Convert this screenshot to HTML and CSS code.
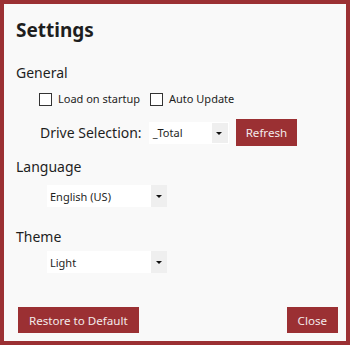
FILE: index.html
```html
<!DOCTYPE html>
<html lang="en">
<head>
  <meta charset="UTF-8">
  <title>Settings</title>
  <link rel="stylesheet" href="styles.css">
</head>
<body>
  <div class="window">
    <h1 class="title">Settings</h1>

    <div class="section section-general">
      <h2>General</h2>
      <div class="checks">
        <label class="check"><span class="box"></span>Load on startup</label>
        <label class="check"><span class="box"></span>Auto Update</label>
      </div>
      <div class="drive-row">
        <span class="drive-label">Drive Selection:</span>
        <div class="select select-small">
          <span class="value">_Total</span>
          <span class="arrow"></span>
        </div>
        <button class="btn btn-refresh">Refresh</button>
      </div>
    </div>

    <div class="section section-language">
      <h2>Language</h2>
      <div class="select select-wide">
        <span class="value">English (US)</span>
        <span class="arrow"></span>
      </div>
    </div>

    <div class="section section-theme">
      <h2>Theme</h2>
      <div class="select select-wide">
        <span class="value">Light</span>
        <span class="arrow"></span>
      </div>
    </div>

    <div class="footer">
      <button class="btn">Restore to Default</button>
      <button class="btn">Close</button>
    </div>
  </div>
</body>
</html>
```

FILE: styles.css
```css
html, body {
  margin: 0;
  padding: 0;
}

body {
  font-family: 'Noto Sans', 'Open Sans', sans-serif;
  color: #1e1e1e;
}

.window {
  width: 350px;
  height: 345px;
  box-sizing: border-box;
  border: 4px solid #9b3033;
  background: #f9f9f9;
  padding: 0 8px 8px 12px;
  display: flex;
  flex-direction: column;
}

.title {
  font-size: 19px;
  font-weight: 700;
  margin: 14px 0 0 0;
  line-height: 24px;
}

.section h2 {
  font-size: 14px;
  font-weight: 400;
  margin: 0;
  line-height: 18px;
}

.section-general {
  margin-top: 22px;
}

.section-language {
  margin-top: 12px;
}

.section-theme {
  margin-top: 21px;
}

.checks {
  display: flex;
  gap: 10px;
  margin: 10px 0 0 23px;
}

.check {
  display: flex;
  align-items: center;
  font-size: 11px;
  line-height: 14px;
}

.box {
  width: 11px;
  height: 11px;
  border: 1px solid #333;
  background: #fff;
  margin-right: 6px;
}

.drive-row {
  display: flex;
  align-items: center;
  margin: 13px 0 0 24px;
}

.drive-label {
  font-size: 14px;
  margin-right: 7px;
}

.select {
  display: flex;
  align-items: stretch;
  background: #fff;
  font-size: 11px;
  height: 22px;
}

.select .value {
  flex: 1;
  display: flex;
  align-items: center;
  padding-left: 3px;
}

.select .arrow {
  width: 16px;
  background: #efefef;
  position: relative;
}

.select .arrow::after {
  content: "";
  position: absolute;
  left: 5px;
  top: 10px;
  border-left: 3px solid transparent;
  border-right: 3px solid transparent;
  border-top: 3px solid #111;
}

.select-small {
  width: 80px;
  border: 1px solid #fff;
  box-sizing: border-box;
  height: 22px;
}

.select-small .arrow::after {
  left: 4px;
  top: 9px;
}

.select-wide {
  width: 120px;
  margin: 9px 0 0 31px;
}

.section-theme .select-wide {
  margin-top: 5px;
}

.btn {
  background: #9b3033;
  color: #f3eaea;
  border: none;
  font-family: inherit;
  font-size: 11.6px;
  padding: 0 11px;
  height: 26px;
  cursor: pointer;
}

.btn-refresh {
  height: 27px;
  padding: 0 10px;
  margin-left: 7px;
}

.footer {
  margin-top: auto;
  display: flex;
  justify-content: space-between;
  padding-left: 2px;
}
```
